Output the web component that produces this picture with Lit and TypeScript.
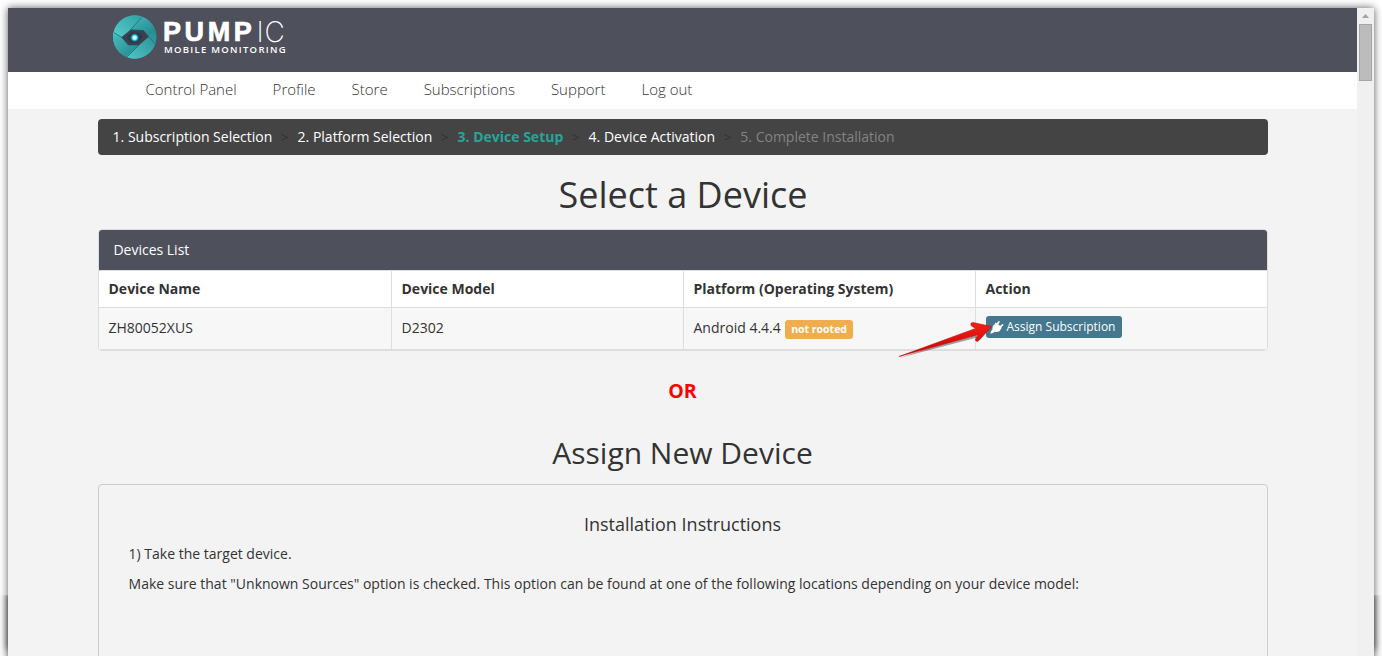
import { LitElement, html, css } from "lit";
import { customElement } from "lit/decorators.js";

@customElement("app-root")
export class AppRoot extends LitElement {
  static styles = css`
    :host { display: block; height: 656px; overflow: hidden; background: #fff; box-sizing: border-box; padding: 8px 8px 0; position: relative;
      font: 14px/20px "Open Sans", "Noto Sans", sans-serif; color: #333; }
    * { box-sizing: border-box; }
    .window { display: flex; height: 700px; box-shadow: 0 0 8px rgba(0,0,0,.65); position: relative; background: #f3f3f3; }
    .edge { position: absolute; top: 595px; height: 54px; left: 8px; right: 8px; box-shadow: 0 0 7px 1px rgba(0,0,0,.6); clip-path: inset(0 -8px -8px -8px); }
    .page { width: 1349px; flex: none; }
    .header { height: 64px; background: #4e505c; padding: 6px 0 0 104px; display: flex; gap: 6px; color: #fff; }
    .logo { display: block; flex: none; }
    .brand { display: flex; flex-direction: column; white-space: nowrap; }
    .name { display: flex; height: 29px; line-height: 36px; font-size: 27px; }
    .pump { font-family: "Liberation Sans", Arial, sans-serif; font-weight: 700; letter-spacing: 3.6px; width: 93.5px; -webkit-text-stroke: .7px #fff; }
    .ic { font-family: Inter, "Open Sans", sans-serif; font-weight: 200; font-size: 28px; letter-spacing: .8px; line-height: 36px; }
    .tagline { font-size: 9.5px; line-height: 14px; font-weight: 600; letter-spacing: 1.28px; padding-left: 1px; }
    .nav { height: 37px; background: #fff; display: flex; gap: 36px; padding: 7px 0 0 137.5px; font-size: 15px; font-weight: 300; white-space: nowrap; }
    .container { width: 1170px; margin: 10px auto 0 90px; }
    .crumbs { height: 36px; background: #444; border-radius: 4px; display: flex; padding: 8px 14.6px; color: #fff; white-space: nowrap; }
    .sep { width: 25.3px; padding-left: 9px; color: #303030; font-size: 13px; }
    .current { color: #26a69a; font-weight: 700; }
    .later { color: #838383; }
    h1 { font-size: 36px; line-height: 40px; font-weight: 400; margin: 20px 0 14px 0; text-align: center; }
    .panel { height: 122px; border: 1px solid #ddd; border-radius: 4px; overflow: hidden; background: #fff; }
    .title { height: 40px; background: #4e505c; color: #fff; padding: 10px 14.4px; }
    .row { display: grid; grid-template-columns: 293px 292px 292px 1fr; border-top: 1px solid #ddd; height: 37px; }
    .row.data { height: 43px; background: #f7f7f7; border-bottom: 1px solid #ddd; }
    .cell { border-right: 1px solid #ddd; padding: 8px 9.5px; white-space: nowrap; }
    .cell:last-child { border: 0; }
    .head { font-weight: 700; }
    .data .cell { padding-top: 10px; }
    .data .cell:last-child { padding-top: 8px; }
    .platform { display: flex; gap: 4.3px; }
    .tag { height: 19px; line-height: 19px; margin-top: 2px; background: #f0ad4e; color: #fff; border-radius: 3px; font-size: 10.5px; font-weight: 700; width: 68px; text-align: center; }
    .button { display: flex; align-items: center; gap: 3px; width: 136px; height: 22px; background: #45778e; color: #fff; border-radius: 3px; padding-left: 4px; font-size: 12px; }
    .or { text-align: center; color: #f00; font-size: 19.6px; line-height: 24px; font-weight: 700; margin: 28px 1px 0 0; }
    h2 { font-size: 30px; line-height: 34px; font-weight: 400; text-align: center; margin: 33px 1px 14px 0; }
    .well { height: 220px; border: 1px solid #ccc; border-radius: 4px; padding: 28px 29.6px; }
    h3 { font-size: 18px; line-height: 22px; font-weight: 400; text-align: center; margin: 0 1px 9px 0; }
    p { margin: 0 0 10px; }
    .scroll { width: 17px; background: #f0f0f0; padding: 0 2px; }
    .up { display: block; width: 13px; height: 16px; }
    .thumb { height: 57px; background: #bcbcbc; border: 1px solid #a6a6a6; }
    .arrow { position: absolute; left: 890px; top: 310px; pointer-events: none; }
  `;

  private links = ["Control Panel", "Profile", "Store", "Subscriptions", "Support", "Log out"];

  render() {
    return html`
      <div class="edge"></div>
      <div class="window">
        <div class="page">
          <div class="header">
            <svg class="logo" width="45" height="50" viewBox="6 12 135 150">
              <defs>
                <linearGradient id="a" x1="0" y1="1" x2="1" y2="0"><stop offset="0" stop-color="#5bd0ce"/><stop offset="1" stop-color="#27979c"/></linearGradient>
                <linearGradient id="b" x1="0" y1="0" x2=".6" y2="1"><stop offset="0" stop-color="#48bdbf"/><stop offset="1" stop-color="#1b7b83"/></linearGradient>
                <linearGradient id="d" x1="1" y1="0" x2="0" y2="1"><stop offset="0" stop-color="#23868d"/><stop offset="1" stop-color="#55cccc"/></linearGradient>
                <linearGradient id="e" x1="0" y1="0" x2="1" y2="1"><stop offset="0" stop-color="#4ec5c6"/><stop offset="1" stop-color="#1d7f87"/></linearGradient>
                <radialGradient id="g"><stop offset="0" stop-color="#fff"/><stop offset=".35" stop-color="#c8f8ff"/><stop offset=".6" stop-color="#18bde8"/><stop offset="1" stop-color="#087fa3" stop-opacity="0"/></radialGradient>
                <clipPath id="c"><circle cx="74" cy="81" r="65"/></clipPath>
              </defs>
              <g clip-path="url(#c)">
                <path fill="#329fa4" d="M0 0h150v156H0z"/>
                <path fill="url(#a)" d="M0 68V0h110L92 26 42 80 24 84z"/>
                <path fill="url(#b)" d="M94 24 150 10v100l-14-8-36-40-39-3z"/>
                <path fill="url(#d)" d="m145 58-34 22-24 25-42 42 30 12 75-18z"/>
                <path fill="url(#e)" d="M0 60 35 82l19 23h33l-50 42L0 130z"/>
                <path d="M94 24 61 59l39 3 38 42M87 105l-42 42M87 105H54L38 84 9 66" stroke="#14646d" stroke-width="2.5" fill="none" opacity=".8"/>
                <path fill="#394150" d="m34 82 27-22 39 1 16 19-28 25H56z"/>
                <path fill="#262e3b" opacity=".5" d="m50 83 15-16 23 1 10 13-17 17H63z"/>
                <circle cx="74" cy="83" r="14" fill="url(#g)"/>
              </g>
            </svg>
            <div class="brand">
              <div class="name"><span class="pump">PUMP</span><span class="ic">IC</span></div>
              <div class="tagline">MOBILE MONITORING</div>
            </div>
          </div>
          <div class="nav">${this.links.map((l) => html`<span>${l}</span>`)}</div>
          <div class="container">
            <div class="crumbs">
              <span>1. Subscription Selection</span><span class="sep">&gt;</span>
              <span>2. Platform Selection</span><span class="sep">&gt;</span>
              <span class="current">3. Device Setup</span><span class="sep">&gt;</span>
              <span>4. Device Activation</span><span class="sep">&gt;</span>
              <span class="later">5. Complete Installation</span>
            </div>
            <h1>Select a Device</h1>
            <div class="panel">
              <div class="title">Devices List</div>
              <div class="row head">
                <div class="cell">Device Name</div><div class="cell">Device Model</div>
                <div class="cell">Platform (Operating System)</div><div class="cell">Action</div>
              </div>
              <div class="row data">
                <div class="cell">ZH80052XUS</div><div class="cell">D2302</div>
                <div class="cell platform"><span>Android 4.4.4</span><span class="tag">not rooted</span></div>
                <div class="cell"><div class="button">
                  <svg width="14" height="13" viewBox="0 0 14 13"><path fill="#fff" d="M6.6 2.3 8.6.3q1-.6 1.3.4L8.3 3.3 10 4.9l2.5-1.8q1.2 0 .8 1.1l-2.1 2 .6.9-.9.7q-1 3.3-4.5 3.2l-1.5-.3L2.8 12 .3 12.8l.7-2.5 1.5-1.8Q1.8 4.6 5 3.1l.5-1.5z"/></svg>
                  <span>Assign Subscription</span>
                </div></div>
              </div>
            </div>
            <div class="or">OR</div>
            <h2>Assign New Device</h2>
            <div class="well">
              <h3>Installation Instructions</h3>
              <p>1) Take the target device.</p>
              <p>Make sure that "Unknown Sources" option is checked. This option can be found at one of the following locations depending on your device model:</p>
            </div>
          </div>
        </div>
        <div class="scroll">
          <svg class="up" viewBox="0 0 13 16"><path fill="#a3a3a3" d="M3 10h7L6.5 6z"/></svg>
          <div class="thumb"></div>
        </div>
      </div>
      <svg class="arrow" width="106" height="54" viewBox="890 310 106 54">
        <defs><linearGradient id="r" x1="0" y1="0" x2="0" y2="1"><stop offset="0" stop-color="#f52018"/><stop offset="1" stop-color="#c60000"/></linearGradient></defs>
        <path d="m899 358 80-21-3 4q1 2 4-1l12-13z" fill="#444" opacity=".5"/>
        <path d="M899 356.5 975.500 328.500 971 325.500Q970 322.500 973 322.500L991.500 326.500 978 341Q975 342 975.500 339L978.500 334.500Z" fill="url(#r)" stroke="#c91010" stroke-width=".6"/>
      </svg>
    `;
  }
}
